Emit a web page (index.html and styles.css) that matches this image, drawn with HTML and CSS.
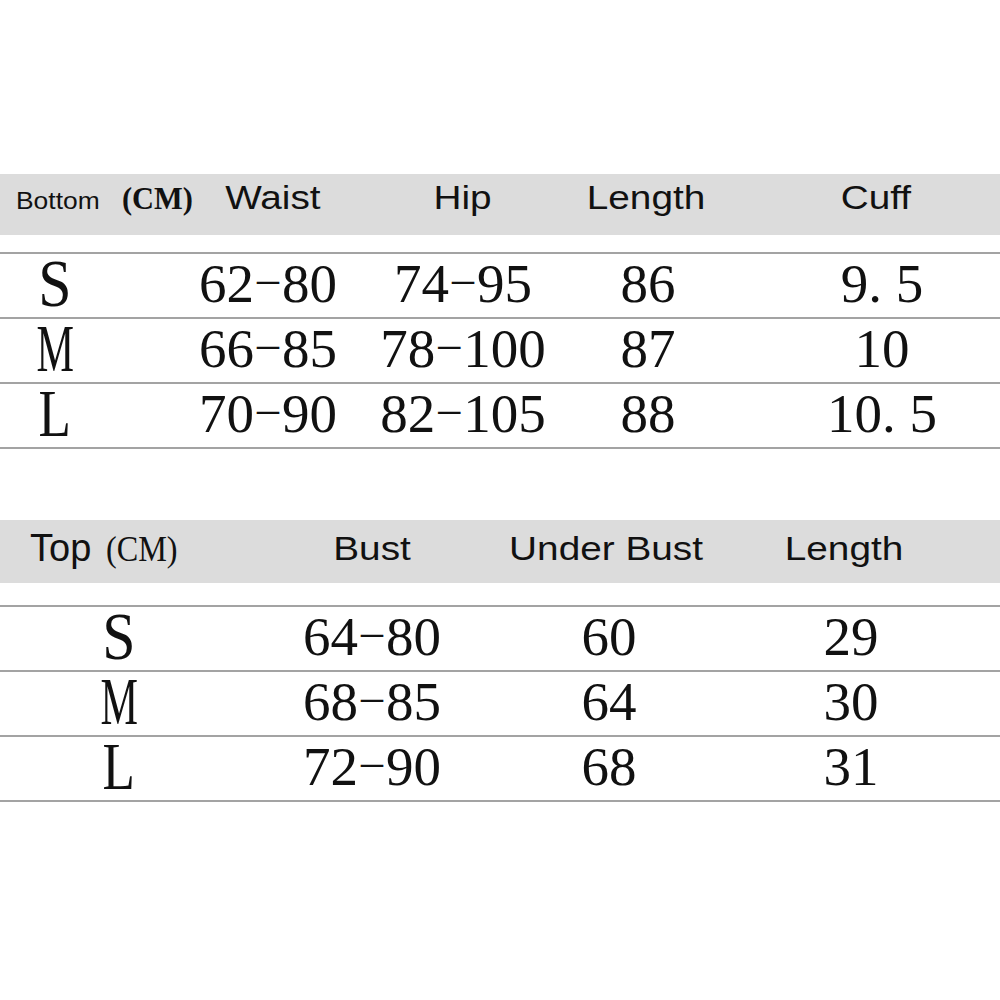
FILE: index.html
```html
<!DOCTYPE html>
<html lang="en">
<head>
<meta charset="utf-8">
<title>Size Chart</title>
<link rel="stylesheet" href="styles.css">
</head>
<body>
<main class="page">
  <section class="chart chart-bottom">
    <div class="head">
      <div class="label"><span class="lbl-small">Bottom</span><span class="cm cm-bold">(CM)</span></div>
      <div class="h c2"><span class="wide">Waist</span></div>
      <div class="h c3"><span class="wide">Hip</span></div>
      <div class="h c4"><span class="wide">Length</span></div>
      <div class="h c5"><span class="wide">Cuff</span></div>
    </div>
    <div class="rows">
      <div class="row">
        <div class="size"><span class="sz-s">S</span></div>
        <div class="num c2">62<span class="d">–</span>80</div>
        <div class="num c3">74<span class="d">–</span>95</div>
        <div class="num c4">86</div>
        <div class="num c5">9. 5</div>
      </div>
      <div class="row">
        <div class="size"><span class="sz-m">M</span></div>
        <div class="num c2">66<span class="d">–</span>85</div>
        <div class="num c3">78<span class="d">–</span>100</div>
        <div class="num c4">87</div>
        <div class="num c5">10</div>
      </div>
      <div class="row">
        <div class="size"><span class="sz-l">L</span></div>
        <div class="num c2">70<span class="d">–</span>90</div>
        <div class="num c3">82<span class="d">–</span>105</div>
        <div class="num c4">88</div>
        <div class="num c5">10. 5</div>
      </div>
    </div>
  </section>

  <section class="chart chart-top">
    <div class="head">
      <div class="label"><span class="lbl-big">Top</span><span class="cm cm-reg">(CM)</span></div>
      <div class="h c2"><span class="wide">Bust</span></div>
      <div class="h c3"><span class="wide">Under Bust</span></div>
      <div class="h c4"><span class="wide">Length</span></div>
    </div>
    <div class="rows">
      <div class="row">
        <div class="size"><span class="sz-s">S</span></div>
        <div class="num c2">64<span class="d">–</span>80</div>
        <div class="num c3">60</div>
        <div class="num c4">29</div>
      </div>
      <div class="row">
        <div class="size"><span class="sz-m">M</span></div>
        <div class="num c2">68<span class="d">–</span>85</div>
        <div class="num c3">64</div>
        <div class="num c4">30</div>
      </div>
      <div class="row">
        <div class="size"><span class="sz-l">L</span></div>
        <div class="num c2">72<span class="d">–</span>90</div>
        <div class="num c3">68</div>
        <div class="num c4">31</div>
      </div>
    </div>
  </section>
</main>
</body>
</html>
```
FILE: styles.css
```css
html, body {
  margin: 0;
  padding: 0;
  background: #ffffff;
}

body {
  width: 1000px;
  height: 1000px;
  overflow: hidden;
  color: #111111;
  font-family: "Liberation Sans", Arial, sans-serif;
}

.page {
  padding-top: 174px;
}

/* ---------- header band ---------- */
.head {
  display: grid;
  box-sizing: border-box;
  background: #dcdcdc;
  font-size: 34px;
  line-height: 39px;
  white-space: nowrap;
}

.h {
  text-align: center;
}

.wide {
  display: inline-block;
  transform: scaleX(1.14);
}

.label {
  white-space: nowrap;
}

.lbl-small {
  display: inline-block;
  font-size: 24px;
  transform: scaleX(1.1);
  transform-origin: left center;
}

.lbl-big {
  font-size: 38px;
}

.cm {
  display: inline-block;
  font-family: "Liberation Serif", "Times New Roman", serif;
  transform-origin: left center;
}

.cm-bold {
  font-size: 32px;
  font-weight: bold;
  margin-left: 30px;
  transform: scaleX(0.95);
}

.cm-reg {
  font-size: 35px;
  margin-left: 15px;
  transform: scaleX(0.92);
}

/* ---------- body rows ---------- */
.rows {
  border-top: 2px solid #a3a3a3;
}

.row {
  display: grid;
  height: 63px;
  align-items: start;
  border-bottom: 2px solid #a3a3a3;
  font-family: "Liberation Serif", "Times New Roman", serif;
  white-space: nowrap;
}

.num {
  font-size: 55px;
  line-height: 59px;
  text-align: center;
}

.d {
  font-size: 0.8em;
  vertical-align: 0.2em;
  margin: 0 0.07em;
  line-height: 0;
}

.size {
  font-size: 68px;
  line-height: 59px;
  text-align: center;
}

.size span {
  display: inline-block;
}

.sz-s { transform: scaleX(0.88); }
.sz-m { transform: scaleX(0.62); }
.sz-l { transform: scaleX(0.78); }

/* ---------- bottom chart ---------- */
.chart-bottom .head {
  height: 61px;
  padding-top: 4px;
  grid-template-columns: 200px 160px 206px 160px 1fr;
}

.chart-bottom .label {
  padding-left: 16px;
}

.chart-bottom .head .c2 { padding-right: 14px; }
.chart-bottom .head .c5 { padding-left: 26px; }

.chart-bottom .rows {
  margin-top: 17px;
}

.chart-bottom .row {
  grid-template-columns: 110px 250px 206px 164px 1fr;
}

.chart-bottom .row .c2 { padding-left: 66px; }
.chart-bottom .row .c5 { padding-left: 34px; }

/* ---------- top chart ---------- */
.chart-top {
  margin-top: 71px;
}

.chart-top .head {
  height: 63px;
  padding-top: 9px;
  grid-template-columns: 238px 268px 206px 278px;
}

.chart-top .label {
  padding-left: 30px;
}

.chart-top .head .c3 { padding-right: 6px; }
.chart-top .head .c4 { padding-right: 14px; }

.chart-top .rows {
  margin-top: 22px;
}

.chart-top .row {
  grid-template-columns: 238px 268px 206px 278px;
}
```
